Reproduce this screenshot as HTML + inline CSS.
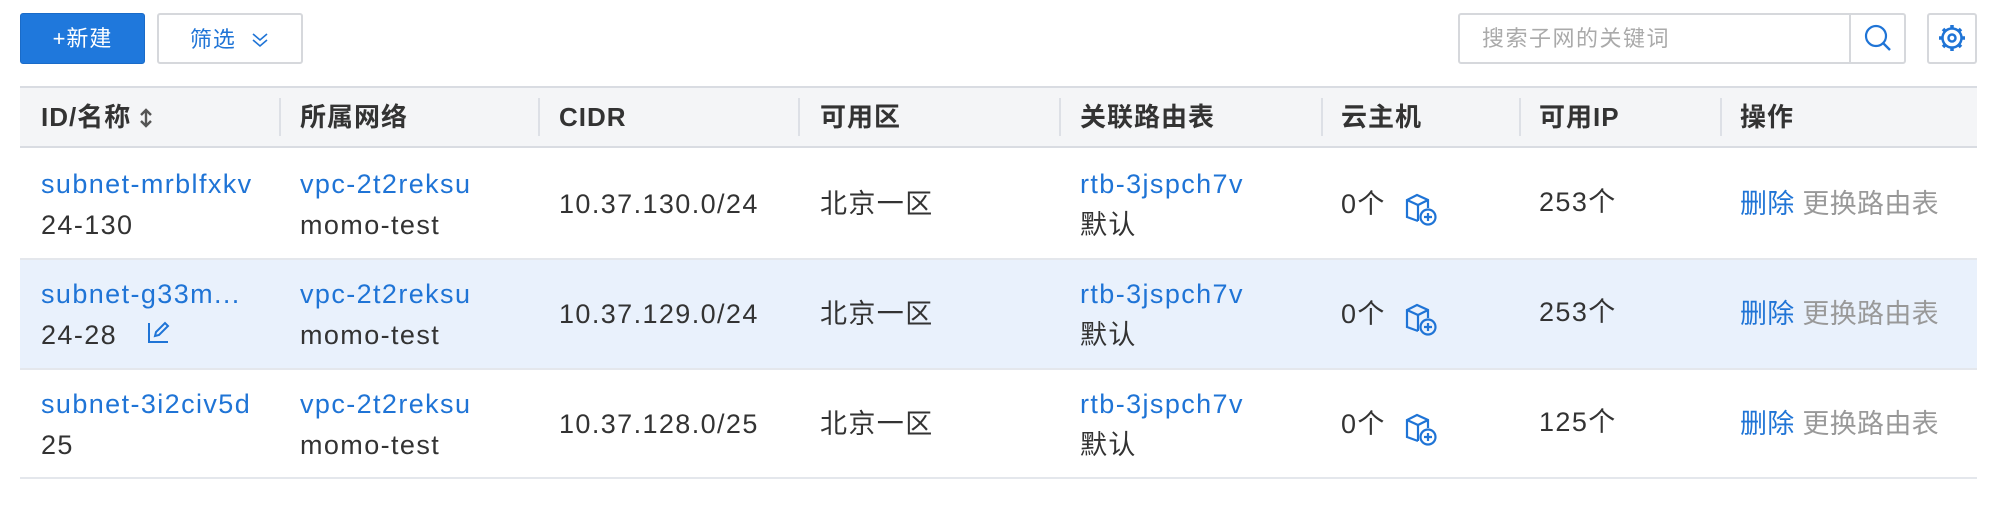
<!DOCTYPE html>
<html><head><meta charset="utf-8"><style>
*{box-sizing:border-box;margin:0;padding:0}
body{width:1992px;height:518px;background:#fff;font-family:"Liberation Sans","Noto Sans CJK SC",sans-serif;color:#333;position:relative;overflow:hidden}
.a{position:absolute}
.btn{position:absolute;top:13px;height:51px;border-radius:3px;font-size:22px;line-height:49px;text-align:center;letter-spacing:1px}
.l{color:#1f74d6}
.g{color:#999}
.t{font-size:27px;line-height:34px;height:34px;white-space:nowrap;letter-spacing:1.4px}
.h{font-size:26px;line-height:34px;font-weight:bold;color:#333;top:100px;white-space:nowrap;letter-spacing:1px}
.dv{position:absolute;top:98px;width:2px;height:38px;background:#dde0e6}
</style></head><body>
<div class="btn" style="left:20px;width:125px;background:#1f78dc;color:#fff;border:1px solid #1a6bc8">+新建</div>
<div class="btn" style="left:157px;width:146px;border:2px solid #d6d8dc;color:#1f74d6;">筛选&nbsp;&nbsp;<svg width="20" height="18" viewBox="0 0 20 18" style="vertical-align:-2px"><path d="M3 3l7 6 7-6M3 9l7 6 7-6" fill="none" stroke="#1f74d6" stroke-width="1.6"/></svg></div>
<div class="a" style="left:1458px;top:13px;width:448px;height:51px;border:2px solid #d6d8dc;border-radius:3px"></div>
<div class="a" style="left:1849px;top:15px;width:2px;height:47px;background:#d6d8dc"></div>
<div class="a" style="left:1482px;top:22px;font-size:22px;line-height:34px;color:#aaa;letter-spacing:1.5px">搜索子网的关键词</div>
<svg class="a" style="left:1862px;top:22px" width="32" height="32" viewBox="0 0 32 32"><circle cx="14" cy="14" r="10" fill="none" stroke="#1f74d6" stroke-width="2.2"/><path d="M21 21l7 7" stroke="#1f74d6" stroke-width="2.4"/></svg>
<div class="a" style="left:1927px;top:13px;width:50px;height:51px;border:2px solid #d6d8dc;border-radius:3px"></div>
<svg class="a" style="left:1936px;top:22px" width="32" height="32" viewBox="0 0 32 32"><g stroke="#1f74d6" stroke-width="3.5"><path d="M16 3v26M3 16h26M7 7l18 18M25 7L7 25"/></g><circle cx="16" cy="16" r="9.5" fill="#fff" stroke="#1f74d6" stroke-width="2.5"/><circle cx="16" cy="16" r="3.5" fill="none" stroke="#1f74d6" stroke-width="2.5"/></svg>

<div class="a" style="left:20px;top:86px;width:1957px;height:62px;background:#f4f5f7;border-top:2px solid #d9dce2;border-bottom:2px solid #d9dce2"></div>
<div class="a h" style="left:41px">ID/名称 <svg width="14" height="22" viewBox="0 0 14 22" style="vertical-align:-3px"><path d="M2 8l5-5 5 5M2 14l5 5 5-5M7 3v16" fill="none" stroke="#555" stroke-width="2.4"/></svg></div>
<div class="a h" style="left:300px">所属网络</div>
<div class="a h" style="left:559px">CIDR</div>
<div class="a h" style="left:820px">可用区</div>
<div class="a h" style="left:1080px">关联路由表</div>
<div class="a h" style="left:1341px">云主机</div>
<div class="a h" style="left:1539px">可用IP</div>
<div class="a h" style="left:1740px">操作</div>
<div class="dv" style="left:279px"></div><div class="dv" style="left:538px"></div><div class="dv" style="left:798px"></div><div class="dv" style="left:1059px"></div><div class="dv" style="left:1321px"></div><div class="dv" style="left:1519px"></div><div class="dv" style="left:1720px"></div>

<div class="a" style="left:20px;top:259px;width:1957px;height:110px;background:#e9f1fc"></div>
<div class="a" style="left:20px;top:258px;width:1957px;height:2px;background:#e4e7ec"></div>
<div class="a" style="left:20px;top:368px;width:1957px;height:2px;background:#e4e7ec"></div>
<div class="a" style="left:20px;top:477px;width:1957px;height:2px;background:#e4e7ec"></div>

<div class="a t l" style="left:41px;top:167px">subnet-mrblfxkv</div>
<div class="a t" style="left:41px;top:208px">24-130</div>
<div class="a t l" style="left:41px;top:277px">subnet-g33m...</div>
<div class="a t" style="left:41px;top:318px">24-28</div>
<svg class="a" style="left:147px;top:320px" width="24" height="24" viewBox="0 0 24 24"><path d="M2 3v19h19" fill="none" stroke="#1f74d6" stroke-width="2"/><path d="M8 16l1-4 9-9 3 3-9 9z" fill="none" stroke="#1f74d6" stroke-width="2"/></svg>
<div class="a t l" style="left:41px;top:387px">subnet-3i2civ5d</div>
<div class="a t" style="left:41px;top:428px">25</div>

<div class="a t l" style="left:300px;top:167px">vpc-2t2reksu</div><div class="a t" style="left:300px;top:208px">momo-test</div>
<div class="a t l" style="left:300px;top:277px">vpc-2t2reksu</div><div class="a t" style="left:300px;top:318px">momo-test</div>
<div class="a t l" style="left:300px;top:387px">vpc-2t2reksu</div><div class="a t" style="left:300px;top:428px">momo-test</div>

<div class="a t" style="left:559px;top:187px">10.37.130.0/24</div>
<div class="a t" style="left:559px;top:297px">10.37.129.0/24</div>
<div class="a t" style="left:559px;top:407px">10.37.128.0/25</div>
<div class="a t" style="left:820px;top:187px">北京一区</div>
<div class="a t" style="left:820px;top:297px">北京一区</div>
<div class="a t" style="left:820px;top:407px">北京一区</div>

<div class="a t l" style="left:1080px;top:167px">rtb-3jspch7v</div><div class="a t" style="left:1080px;top:208px">默认</div>
<div class="a t l" style="left:1080px;top:277px">rtb-3jspch7v</div><div class="a t" style="left:1080px;top:318px">默认</div>
<div class="a t l" style="left:1080px;top:387px">rtb-3jspch7v</div><div class="a t" style="left:1080px;top:428px">默认</div>

<div class="a t" style="left:1341px;top:187px">0个</div>
<div class="a t" style="left:1341px;top:297px">0个</div>
<div class="a t" style="left:1341px;top:407px">0个</div>
<svg class="a" style="left:1404px;top:191px" width="34" height="36" viewBox="0 0 34 36"><g fill="none" stroke="#1f74d6" stroke-width="2.2"><path d="M14 30L3 26V9L13 4l11 5v8M3 9l11 5 10-5M14 14v16"/><circle cx="24" cy="26" r="7.5" fill="#fff"/><path d="M24 22v8M20 26h8"/></g></svg>
<svg class="a" style="left:1404px;top:301px" width="34" height="36" viewBox="0 0 34 36"><g fill="none" stroke="#1f74d6" stroke-width="2.2"><path d="M14 30L3 26V9L13 4l11 5v8M3 9l11 5 10-5M14 14v16"/><circle cx="24" cy="26" r="7.5" fill="#e9f1fc"/><path d="M24 22v8M20 26h8"/></g></svg>
<svg class="a" style="left:1404px;top:411px" width="34" height="36" viewBox="0 0 34 36"><g fill="none" stroke="#1f74d6" stroke-width="2.2"><path d="M14 30L3 26V9L13 4l11 5v8M3 9l11 5 10-5M14 14v16"/><circle cx="24" cy="26" r="7.5" fill="#fff"/><path d="M24 22v8M20 26h8"/></g></svg>

<div class="a t" style="left:1539px;top:185px">253个</div>
<div class="a t" style="left:1539px;top:295px">253个</div>
<div class="a t" style="left:1539px;top:405px">125个</div>

<div class="a t" style="left:1740px;top:187px;letter-spacing:0.3px"><span class="l">删除</span> <span class="g">更换路由表</span></div>
<div class="a t" style="left:1740px;top:297px;letter-spacing:0.3px"><span class="l">删除</span> <span class="g">更换路由表</span></div>
<div class="a t" style="left:1740px;top:407px;letter-spacing:0.3px"><span class="l">删除</span> <span class="g">更换路由表</span></div>
</body></html>
